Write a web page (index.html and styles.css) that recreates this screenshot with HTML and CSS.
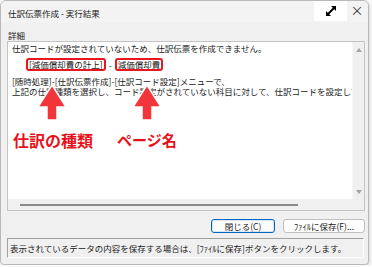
FILE: index.html
```html
<!DOCTYPE html>
<html>
<head>
    <title>仕訳伝票作成 - 実行結果</title>
    <link rel="stylesheet" href="styles.css">
</head>
<body>
    <div class="window">
        <div class="titlebar">
            <span class="title">仕訳伝票作成 - 実行結果</span>
            <div class="title-buttons">
                <span class="btn-expand">
                    <svg width="14" height="14" viewBox="0 0 14 14">
                        <path d="M3 11 L11 3" stroke="#000" stroke-width="2"/>
                        <path d="M7 2 H12 V7 Z" fill="#000"/>
                        <path d="M2 7 V12 H7 Z" fill="#000"/>
                    </svg>
                </span>
                <span class="btn-close">×</span>
            </div>
        </div>
        <div class="content">
            <div class="label">詳細</div>
            <div class="detail-box">
                <div class="detail-text">
                    <div class="line">仕訳コードが設定されていないため、仕訳伝票を作成できません。</div>
                    <div class="line mark-line"><span class="mark">[減価償却費の計上]</span><span class="dash">-</span><span class="mark">減価償却費</span></div>
                    <div class="line menu-line">[随時処理]-[仕訳伝票作成]-[仕訳コード設定]メニューで、</div>
                    <div class="line">上記の仕訳種類を選択し、コード設定がされていない科目に対して、仕訳コードを設定してください。</div>

                    <svg class="arrows" width="200" height="90" viewBox="0 0 200 90">
                        <path d="M44 43 L58 65 L49 65 L49 78 L39 78 L39 65 L30 65 Z" fill="#f2353b" stroke="#fff" stroke-width="1.5"/>
                        <path d="M139 43 L153 65 L144 65 L144 78 L134 78 L134 65 L125 65 Z" fill="#f2353b" stroke="#fff" stroke-width="1.5"/>
                    </svg>
                    <span class="note note-kind">仕訳の種類</span>
                    <span class="note note-page">ページ名</span>
                </div>
                <div class="vscroll">
                    <span class="tri-up"></span>
                    <span class="tri-down"></span>
                </div>
                <div class="hscroll"><span class="thumb"></span></div>
                <div class="corner"></div>
            </div>
            <div class="buttons">
                <button class="default">閉じる(C)</button>
                <button class="save">ﾌｧｲﾙに保存(F)...</button>
            </div>
            <div class="status">表示されているデータの内容を保存する場合は、[ﾌｧｲﾙに保存]ボタンをクリックします。</div>
        </div>
    </div>
</body>
</html>
```

FILE: styles.css
```css
body {
    margin: 0;
    background-color: #fafafa;
    font-family: "Noto Sans CJK JP", "Noto Sans", sans-serif;
    font-size: 8.5px;
    color: #1a1a1a;
}
.window {
    width: 367px;
    height: 263px;
    border: 1px solid #b9b9b9;
    border-radius: 6px 6px 4px 4px;
    background-color: #f0f0f0;
    box-shadow: 1px 1px 3px rgba(0,0,0,0.15);
    overflow: hidden;
}
.titlebar {
    height: 22px;
    display: flex;
    align-items: flex-start;
    justify-content: space-between;
    background-color: #f3f3f3;
}
.title {
    margin: 7px 0 0 7px;
    line-height: 10px;
}
.title-buttons {
    display: flex;
    align-items: flex-start;
}
.btn-expand {
    width: 33px;
    height: 20px;
    background-color: #fff;
    display: flex;
    align-items: center;
    justify-content: center;
}
.btn-close {
    width: 20px;
    height: 18px;
    font-size: 13px;
    line-height: 18px;
    text-align: center;
    color: #333;
    margin-right: 1px;
}
.content {
    padding: 7px 3px 0 6px;
}
.label {
    line-height: 10px;
    margin-left: 1px;
}
.detail-box {
    margin-top: 1px;
    border: 1px solid #c4c4c4;
    display: grid;
    grid-template-columns: 1fr 12px;
    grid-template-rows: 157px 11px;
    background-color: #fff;
}
.detail-text {
    position: relative;
    padding: 1px 0 0 4px;
    overflow: hidden;
    white-space: nowrap;
}
.line {
    line-height: 10px;
}
.mark-line {
    margin-top: 5px;
    margin-left: 14px;
    display: flex;
    align-items: center;
}
.mark {
    border: 2px solid #e8161e;
    border-radius: 3px;
    padding: 0 1px;
    line-height: 9px;
}
.dash {
    margin: 0 3px;
}
.menu-line {
    margin-top: 5px;
}
.arrows {
    position: absolute;
    left: 0;
    top: 0;
}
.note {
    position: absolute;
    top: 89px;
    font-weight: bold;
    color: #e8111a;
    line-height: 18px;
    text-shadow: -1px -1px 0 #fff, 1px -1px 0 #fff, -1px 1px 0 #fff, 1px 1px 0 #fff, 0 0 2px #fff;
}
.note-kind {
    left: 5px;
    font-size: 16px;
}
.note-page {
    left: 109px;
    font-size: 15px;
}
.vscroll {
    background-color: #f0f0f0;
    border-left: 1px solid #f7f7f7;
    display: flex;
    flex-direction: column;
    justify-content: space-between;
    align-items: center;
    padding: 6px 0 5px;
}
.tri-up {
    width: 0;
    height: 0;
    border-left: 3px solid transparent;
    border-right: 3px solid transparent;
    border-bottom: 4px solid #a3a3a3;
}
.tri-down {
    width: 0;
    height: 0;
    border-left: 3px solid transparent;
    border-right: 3px solid transparent;
    border-top: 4px solid #a3a3a3;
}
.hscroll {
    background-color: #f0f0f0;
    display: flex;
    align-items: center;
    padding-left: 12px;
}
.thumb {
    width: 278px;
    height: 2px;
    background-color: #8a8a8a;
}
.corner {
    background-color: #f0f0f0;
}
.buttons {
    display: flex;
    justify-content: flex-end;
    gap: 8px;
    margin-top: 8px;
}
button {
    font-family: "Noto Sans CJK JP", "Noto Sans", sans-serif;
    font-size: 8.5px;
    height: 14px;
    padding: 0;
    background-color: #fdfdfd;
    border: 1px solid #c0c0c0;
    border-radius: 3px;
    color: #1a1a1a;
    line-height: 10px;
}
button.default {
    width: 64px;
    border-color: #0067c0;
    box-shadow: inset 0 0 0 1px #d6e6f5;
}
button.save {
    width: 82px;
}
.status {
    margin-top: 5px;
    margin-right: 1px;
    height: 18px;
    line-height: 18px;
    padding-left: 2px;
    border-top: 1px solid #a0a0a0;
    border-left: 1px solid #a0a0a0;
    border-bottom: 1px solid #fff;
    border-right: 1px solid #fff;
    white-space: nowrap;
    overflow: hidden;
}
```
